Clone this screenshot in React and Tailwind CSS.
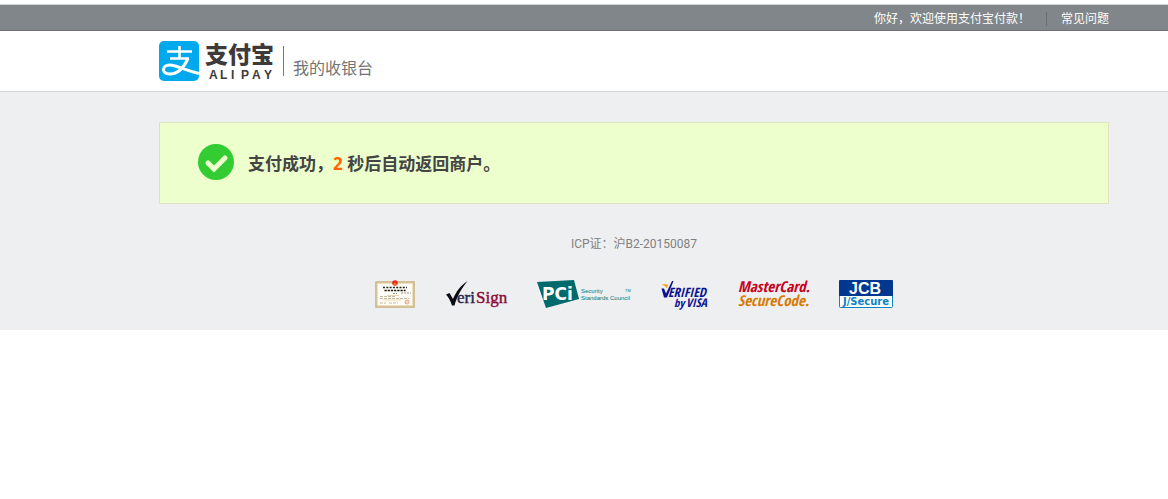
const topLinks = [{ href: '#help', label: '常见问题' }]

function AlipayLogo() {
  return (
    <svg width="115" height="42" viewBox="0 0 115 42" role="img" aria-label="支付宝 ALIPAY" className="overflow-visible">
      <rect x="0" y="1" width="40" height="40" rx="5" fill="#00a9ee" />
      <g fill="none" stroke="#fff" strokeLinecap="butt">
        <path d="M8 11.500H33M20.500 6V18.500M11 18.500H30" strokeWidth="2.600" />
        <path
          d="M29 18.500C26 25 20 34 11 34C6 34 4 31.500 4.500 29C5 26 8.500 24.500 13 25.200C20 26.500 27 30.500 40 33.500"
          strokeWidth="3"
        />
      </g>
      <g fill="#3e3a39" className="font-['Noto_Sans_CJK_SC',sans-serif]">
        <text x="46" y="23" fontSize="23" fontWeight="900">支付宝</text>
      </g>
      <g fill="#3e3a39" className="font-['Liberation_Sans',sans-serif]">
        <text x="50 61 72 82 93 105" y="39" fontSize="12" fontWeight="700">ALIPAY</text>
      </g>
    </svg>
  )
}

function SuccessIcon() {
  return (
    <svg width="36" height="36" viewBox="0 0 36 36" aria-hidden="true" className="shrink-0">
      <circle cx="18" cy="18" r="18" fill="#33cc33" />
      <path d="M10 19L16 25L27 14" fill="none" stroke="#edffcc" strokeWidth="5" strokeLinecap="round" strokeLinejoin="miter" />
    </svg>
  )
}

function CertificateBadge() {
  return (
    <svg width="40" height="28" viewBox="0 0 40 28" role="img" aria-label="Certificate">
      <rect x="1" y="2" width="38" height="25" fill="#fffdf5" stroke="#c9ae7a" strokeWidth="1.500" />
      <rect x="2.500" y="3.500" width="35" height="22" fill="none" stroke="#eadfbe" />
      <circle cx="20" cy="3" r="2.800" fill="#e5281b" />
      <path d="M18.500 4H21.500" stroke="#ffb347" />
      <path d="M8 7.500H32" stroke="#222" strokeWidth="1.500" strokeDasharray="2 1.300" />
      <path d="M9.500 10.500H30.500" stroke="#111" strokeWidth="1.500" strokeDasharray="2.200 1" />
      <path d="M18 13.500H22M26 13H36" stroke="#777" strokeWidth=".8" strokeDasharray="2 1" />
      <path d="M5 16.500H20M5 18.500H34M5 23H11M14 23H23" stroke="#b6a78b" strokeWidth=".8" strokeDasharray="3 1" />
      <path d="M12 15.500H24M8 20H26" stroke="#e8c9a0" strokeWidth=".8" />
      <circle cx="32" cy="22" r="2" fill="#f6d9cc" stroke="#e6a58c" />
    </svg>
  )
}

function VeriSignBadge() {
  return (
    <svg width="62" height="28" viewBox="0 0 62 28" role="img" aria-label="VeriSign" className="overflow-visible">
      <path d="M1 14.500L4.500 13L8 19C11 12 15 6 22.500 1C17 8 12 16 9.500 25.500H7C5.500 21 3.500 17 1 14.500Z" fill="#0b0b16" />
      <g className="font-['Liberation_Serif',serif]" fontSize="17" strokeWidth=".4">
        <text x="12" y="23" fill="#25234a" stroke="#25234a">eri</text>
        <text x="31" y="23" fill="#8a0a35" stroke="#8a0a35">Sign</text>
      </g>
    </svg>
  )
}

function PciBadge() {
  return (
    <svg width="93" height="28" viewBox="0 0 93 28" role="img" aria-label="PCI Security Standards Council" className="overflow-visible">
      <path d="M0 2L37 0L42 19L9 28Z" fill="#006a6d" />
      <g className="font-['DejaVu_Sans',sans-serif]">
        <text x="5" y="20" fill="#fff" fontSize="17" fontWeight="700">PCi</text>
      </g>
      <g fill="#007a7c" className="font-['Liberation_Sans',sans-serif]" fontSize="6">
        <text x="44" y="13">Security</text>
        <text x="44" y="20">Standards Council</text>
        <text x="88" y="12" fontSize="4">TM</text>
      </g>
    </svg>
  )
}

function VisaBadge() {
  return (
    <svg width="48" height="28" viewBox="0 0 48 28" role="img" aria-label="Verified by VISA" className="overflow-visible">
      <path d="M1.500 4.500C4 4 6.500 4 8 4.500L7 8.500C5.500 6 3.500 5 1.500 4.500Z" fill="#f5a11a" />
      <path d="M1.500 8.500H4L6 13.500L12 1H13.500L7 17.500H4Z" fill="#0a138f" />
      <g
        fill="#0a138f"
        fontStyle="italic"
        fontWeight="800"
        className="font-['Liberation_Sans_Narrow','Open_Sans_Condensed','Open_Sans',sans-serif]"
      >
        <text x="8" y="17" fontSize="13">ERIFIED</text>
        <text x="14" y="27" fontSize="11">by</text>
        <text x="26" y="27" fontSize="12">VISA</text>
      </g>
    </svg>
  )
}

function MasterCardBadge() {
  return (
    <svg width="71" height="28" viewBox="0 0 71 28" role="img" aria-label="MasterCard SecureCode" className="overflow-visible">
      <g
        fontSize="15"
        fontStyle="italic"
        fontWeight="800"
        className="font-['Liberation_Sans_Narrow','Open_Sans_Condensed','Open_Sans',sans-serif]"
      >
        <text x="0" y="12" fill="#c8001a">MasterCard.</text>
        <text x="0" y="26" fill="#d67a00">SecureCode.</text>
      </g>
    </svg>
  )
}

function JcbBadge() {
  return (
    <svg width="54" height="28" viewBox="0 0 54 28" role="img" aria-label="JCB J/Secure">
      <rect x=".5" y=".5" width="53" height="27" rx="1" fill="#fff" stroke="#0b83c4" />
      <path d="M0 1Q0 0 1 0H53Q54 0 54 1V16H0Z" fill="#00388f" />
      <g className="font-['Liberation_Sans',sans-serif]" fontWeight="700" textAnchor="middle">
        <text x="26" y="14" fontSize="16" fill="#fff">JCB</text>
      </g>
      <g className="font-['DejaVu_Sans',sans-serif]" fontWeight="700" textAnchor="middle">
        <text x="27" y="25" fontSize="10" fill="#0b83c4">J/Secure</text>
      </g>
    </svg>
  )
}

export default function App() {
  return (
    <div className="bg-white pt-1 font-['Liberation_Sans','Noto_Sans_CJK_SC',sans-serif] text-xs text-[#808080]">
      <div className="border-t border-b border-t-[#d0d2d4] border-b-[#6c7074] bg-[#81868a] pl-[100px]">
        <div className="mx-auto flex h-[25px] max-w-[950px] items-center justify-end pt-[3px] text-white">
          <span>你好，欢迎使用支付宝付款！</span>
          <span className="ml-4 h-3.5 border-l border-[#6a6e72]" />
          {topLinks.map((item) => (
            <a key={item.href} href={item.href} className="ml-3.5 hover:underline">
              {item.label}
            </a>
          ))}
        </div>
      </div>

      <header className="border-b border-[#d5d7da] pl-[100px]">
        <div className="mx-auto flex h-[60px] max-w-[950px] items-center">
          <a href="#home">
            <AlipayLogo />
          </a>
          <span className="ml-[9px] h-[30px] border-l border-[#777]" />
          <h1 className="mt-4 ml-[9px] text-base leading-6 text-[#737373]">我的收银台</h1>
        </div>
      </header>

      <main className="bg-[#eeeff1] pt-[30px] pb-[22px] pl-[100px]">
        <div className="mx-auto max-w-[950px]">
          <section className="flex items-start border border-[#dfe2bd] bg-[#edffcc] pt-[21px] pb-[23px] pl-[38px]">
            <SuccessIcon />
            <p className="mt-2 ml-3.5 font-['Noto_Sans','Noto_Sans_CJK_SC',sans-serif] text-[17px] leading-6 font-bold text-[#444]">
              支付成功，<span className="text-[#ff6600]">2</span> 秒后自动返回商户。
            </p>
          </section>

          <footer className="pt-8">
            <p className="text-center font-['Roboto','Noto_Sans_CJK_SC',sans-serif] leading-4">ICP证：沪B2-20150087</p>
            <div className="mt-7 flex items-center justify-center gap-[30px]">
              <CertificateBadge />
              <VeriSignBadge />
              <PciBadge />
              <VisaBadge />
              <MasterCardBadge />
              <JcbBadge />
            </div>
          </footer>
        </div>
      </main>
    </div>
  )
}
